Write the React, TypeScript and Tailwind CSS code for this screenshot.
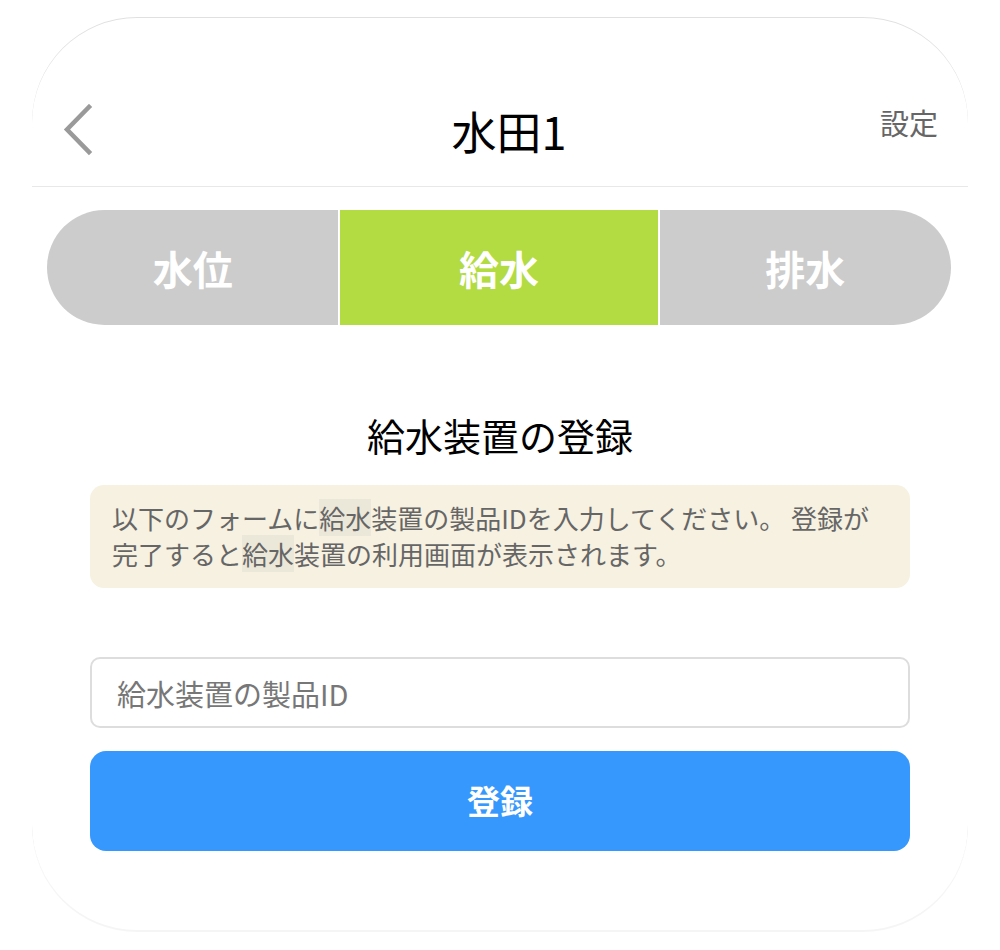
import React, { useState } from 'react';

const TABS = [
  { id: 'level', label: '水位' },
  { id: 'supply', label: '給水' },
  { id: 'drain', label: '排水' },
];

const FONT = { fontFamily: '"Noto Sans CJK JP", "Noto Sans", sans-serif' };

const BackIcon: React.FC = () => (
  <svg width="34" height="52" viewBox="0 0 34 52" fill="none">
    <path d="M27 3 L5 25.5 L27 48" stroke="#9a9a9a" strokeWidth="4.5" strokeLinecap="square" strokeLinejoin="miter" />
  </svg>
);

const App: React.FC = () => {
  const [active, setActive] = useState('supply');
  const [productId, setProductId] = useState('');

  return (
    <div className="w-[1000px] h-[950px] bg-white pt-[18px] px-[32px]" style={FONT}>
      <div className="h-[912px] rounded-[105px] bg-white shadow-[0_-1px_0_rgba(0,0,0,0.12),0_2px_0_rgba(0,0,0,0.04)] flex flex-col">
        {/* Header */}
        <div className="mt-[70px] mb-[14px] h-[84px] px-[30px] grid grid-cols-[1fr_auto_1fr] items-center">
          <button className="justify-self-start">
            <BackIcon />
          </button>
          <h1 className="pl-[18px] text-[45px] font-normal text-black leading-none">水田1</h1>
          <button className="justify-self-end text-[29px] text-[#666] leading-none -mt-[16px]">設定</button>
        </div>
        <div className="h-px bg-[#e8e8e8]" />

        {/* Segmented tabs */}
        <div className="mt-[23px] ml-[15px] mr-[17px] h-[115px] grid grid-cols-[291fr_317fr_291fr] gap-[2px] rounded-full overflow-hidden">
          {TABS.map(tab => (
            <button
              key={tab.id}
              onClick={() => setActive(tab.id)}
              className={`flex items-center justify-center text-[40px] font-bold text-white ${
                active === tab.id ? 'bg-[#b3db42]' : 'bg-[#cccccc]'
              }`}
            >
              {tab.label}
            </button>
          ))}
        </div>

        {/* Registration form */}
        <h2 className="mt-[83px] text-center text-[38px] leading-[54px] text-black">給水装置の登録</h2>

        <div className="mt-[23px] mx-[58px] h-[103px] rounded-[14px] bg-[#f6f1e1] px-[22px] pt-[15px] text-[26px] leading-[36px] text-[#666]">
          以下のフォームに<span className="bg-[#ece8d9]">給水</span>装置の製品IDを入力してください。 登録が
          <br />
          完了すると<span className="bg-[#ece8d9]">給水</span>装置の利用画面が表示されます。
        </div>

        <input
          value={productId}
          onChange={e => setProductId(e.target.value)}
          placeholder="給水装置の製品ID"
          className="mt-[69px] mx-[58px] h-[71px] rounded-[10px] border-2 border-[#dddddd] px-[25px] text-[29px] text-[#333] placeholder:text-[#777] outline-none"
          style={FONT}
        />

        <button className="mt-[23px] mx-[58px] h-[100px] rounded-[16px] bg-[#3698fd] text-[33px] font-bold text-white">
          登録
        </button>
      </div>
    </div>
  );
};

export default App;
